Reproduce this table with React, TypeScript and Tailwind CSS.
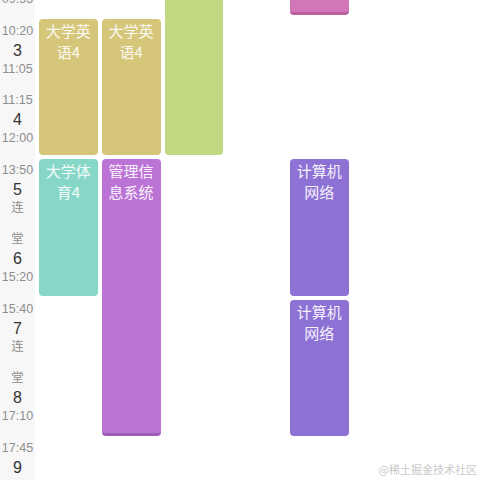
import React from 'react';

type Period = { top: string; num: string; bottom: string };

const periods: Period[] = [
    { top: '08:30', num: '1', bottom: '09:15' },
    { top: '09:10', num: '2', bottom: '09:55' },
    { top: '10:20', num: '3', bottom: '11:05' },
    { top: '11:15', num: '4', bottom: '12:00' },
    { top: '13:50', num: '5', bottom: '连' },
    { top: '堂', num: '6', bottom: '15:20' },
    { top: '15:40', num: '7', bottom: '连' },
    { top: '堂', num: '8', bottom: '17:10' },
    { top: '17:45', num: '9', bottom: '18:30' },
    { top: '18:40', num: '10', bottom: '19:25' },
];

type Course = { name: string; cls: string };

const courses: Course[] = [
    { name: '', cls: 'col-start-3 row-start-1 row-span-4 bg-[#c2d981]' },
    { name: '', cls: 'col-start-5 row-start-1 row-span-2 bg-[#d275b9] border-b-[3px] border-[#b860a0]' },
    { name: '大学英语4', cls: 'col-start-1 row-start-3 row-span-2 bg-[#d5c67a]' },
    { name: '大学英语4', cls: 'col-start-2 row-start-3 row-span-2 bg-[#d5c67a]' },
    { name: '大学体育4', cls: 'col-start-1 row-start-5 row-span-2 bg-[#86d7c8]' },
    { name: '管理信息系统', cls: 'col-start-2 row-start-5 row-span-4 bg-[#bb73d6] border-b-[3px] border-[#9d5bb7]' },
    { name: '计算机网络', cls: 'col-start-5 row-start-5 row-span-2 bg-[#8e71d5]' },
    { name: '计算机网络', cls: 'col-start-5 row-start-7 row-span-2 bg-[#8e71d5]' },
];

export default function App() {
    return (
        <div className="relative h-[480px] w-[480px] overflow-hidden bg-white font-['Liberation_Sans','Noto_Sans_CJK_SC',sans-serif]">
            <div className="flex -mt-[123.75px]">
                {/* Period labels */}
                <div className="w-[35px] shrink-0 bg-[#f7f7f7]">
                    {periods.map(p => (
                        <div key={p.num} className="h-[69.5px] flex flex-col items-center justify-center">
                            <span className="text-[12.5px] leading-[19px] text-[#8e8e8e]">{p.top}</span>
                            <span className="text-[16px] leading-[19px] text-[#333]">{p.num}</span>
                            <span className="text-[12.5px] leading-[19px] text-[#8e8e8e]">{p.bottom}</span>
                        </div>
                    ))}
                </div>

                {/* Course grid */}
                <div className="pl-[2px] grid grid-cols-[repeat(7,62.75px)] grid-rows-[repeat(10,70.25px)] font-['Noto_Sans_CJK_SC',sans-serif]">
                    {courses.map((c, i) => (
                        <div
                            key={i}
                            className={`m-[2px] rounded-[4px] px-[3px] pt-[1px] text-center text-[15px] leading-[21px] text-white/90 ${c.cls}`}
                        >
                            {c.name}
                        </div>
                    ))}
                </div>
            </div>

            <div className="absolute right-[3px] bottom-[3px] text-[11px] text-[#c9c9c9] font-['Noto_Sans_CJK_SC',sans-serif]">
                @稀土掘金技术社区
            </div>
        </div>
    );
}
